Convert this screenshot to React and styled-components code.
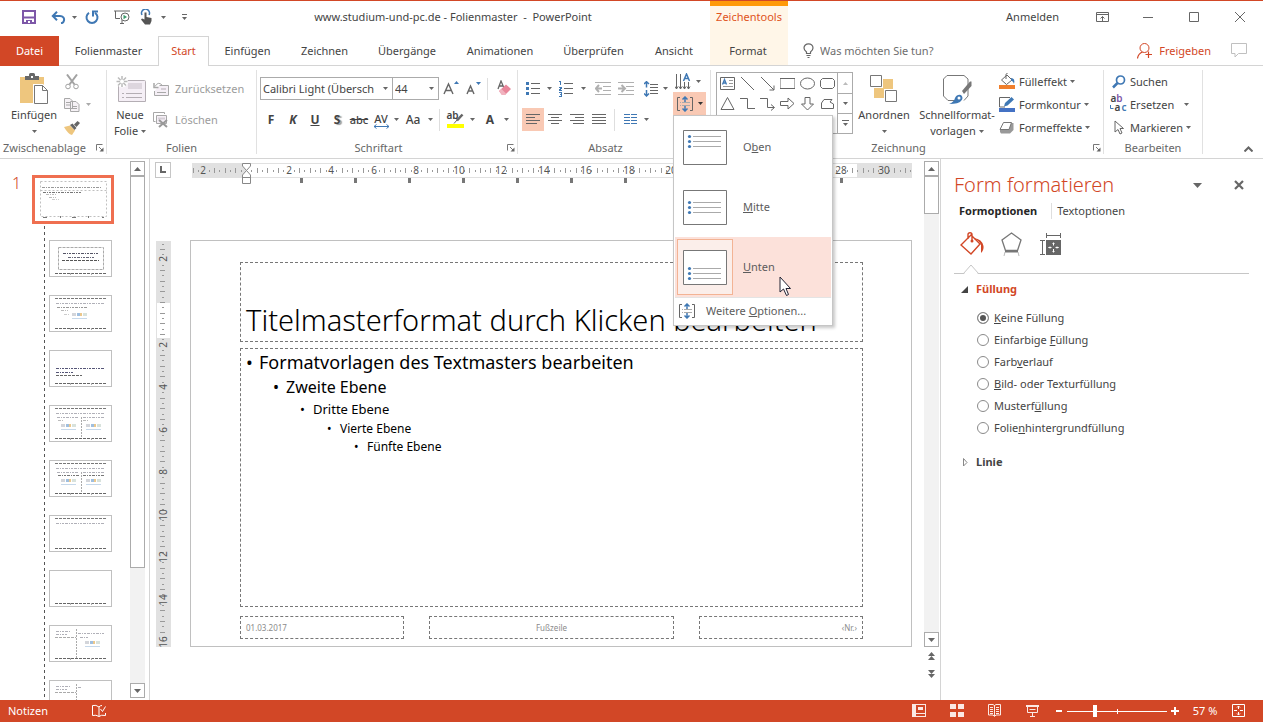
import React from "react";
import styled, { createGlobalStyle, css } from "styled-components";

const RED = "#d24726";
const GRAY = "#666";
const BLUE = "#3f78b4";
const LINE = "#d4d4d4";

const Global = createGlobalStyle`
  *, *::before, *::after { box-sizing: border-box; }
  body { margin: 0; background: #fff; color: #444; font: 11px/16px "Noto Sans", "Open Sans", sans-serif; }
  button, input, select { font: inherit; color: inherit; margin: 0; }
  button { background: none; border: 0; padding: 0; }
  svg { display: block; flex: none; }
  h1, h2, p, ul { margin: 0; padding: 0; }
`;

/* ---------- frame ---------- */
const Window = styled.div`
  height: 100vh; display: flex; flex-direction: column; overflow: hidden;
  border-top: 1px solid ${RED};
`;
const Header = styled.header`display: flex; flex: none; height: 65px;`;
const HeaderLeft = styled.div`display: flex; flex-direction: column; flex: none;`;
const HeaderRight = styled.div`flex: 1; display: flex; flex-direction: column; min-width: 0;`;
const TitleRow = styled.div`display: flex; align-items: center; height: 35px; padding-bottom: 3px;`;
const QuickAccess = styled.div`display: flex; align-items: center; width: 196px; padding-left: 20px;`;
const WindowTitle = styled.h1`flex: 1; text-align: center; font-size: 11px; font-weight: 400;`;
const TabRow = styled.nav`display: flex; height: 30px; border-bottom: 1px solid ${LINE};`;
const Tab = styled.button`
  width: ${(p) => p.$w}px; height: 30px; padding-bottom: 1px; flex: none;
  ${(p) => p.$kind === "file" && css`background: ${RED}; color: #fff;`}
  ${(p) => p.$kind === "active" && css`
    background: #fff; color: ${RED}; border: 1px solid ${LINE}; border-bottom: 0; padding-bottom: 2px;`}
`;
const Context = styled.div`
  width: 78px; flex: none; display: flex; flex-direction: column; background: #fff6e8;
  border-top: 5px solid #ff9a0a; border-bottom: 1px solid ${LINE}; text-align: center;
`;
const ContextName = styled.span`height: 30px; padding-top: 3px; color: #e0541c;`;
const ContextTab = styled.button`height: 29px; padding: 0 2px 0 0;`;
const Slot = styled.button`
  width: ${(p) => p.$w || 22}px; height: ${(p) => p.$h || 22}px; flex: none;
  margin-left: ${(p) => p.$ml || 0}px;
  display: flex; align-items: center; justify-content: center;
  background: ${(p) => (p.$on ? "#f9c9b4" : "transparent")};
`;
const SignIn = styled.button`margin: 0 20px 0 auto;`;
const SearchRow = styled.div`
  display: flex; align-items: center; height: 30px; padding-left: 15px; border-bottom: 1px solid ${LINE};
`;
const TellMe = styled.input`
  border: 0; outline: 0; background: none; padding: 0; margin-left: 6px; width: 160px;
  &::placeholder { color: #6d6d6d; opacity: 1; }
`;
const Share = styled.button`display: flex; align-items: center; gap: 7px; margin-left: auto; padding-right: 4px; color: ${RED};`;

/* ---------- ribbon ---------- */
const Ribbon = styled.section`
  display: flex; flex: none; height: 93px; padding: 4px 0; border-bottom: 1px solid ${LINE};
  position: relative; z-index: 2;
`;
const Group = styled.div`
  display: flex; flex-direction: column; flex: none; width: ${(p) => p.$w}px;
  border-right: 1px solid #e1e1e1;
`;
const GroupBody = styled.div`display: flex; flex: 1; padding-left: ${(p) => p.$pad || 0}px;`;
const GroupFoot = styled.div`display: flex; align-items: center; gap: 4px; height: 12px; color: #666;`;
const GroupName = styled.span`flex: 1; text-align: center;`;
const Col = styled.div`
  display: flex; flex-direction: column; flex: none; gap: ${(p) => p.$gap || 0}px;
  padding-top: ${(p) => p.$top || 0}px;
`;
const Row = styled.div`display: flex; align-items: center; flex: none; height: ${(p) => p.$h || 23}px;`;
const Big = styled.button`
  display: flex; flex-direction: column; align-items: center; flex: none; width: ${(p) => p.$w}px;
`;
const BigArt = styled.span`display: flex; align-items: center; justify-content: center; height: 37px;`;
const BigText = styled.span`display: flex; align-items: center; justify-content: center; gap: 3px; height: 16px; white-space: nowrap;`;
const Command = styled.button`
  display: flex; align-items: center; gap: 3px; height: 23px; white-space: nowrap;
  color: ${(p) => (p.$off ? "#9c9c9c" : "#444")};
`;
const CommandArt = styled.span`display: flex; justify-content: center; width: 17px;`;
const Rule = styled.span`width: 1px; height: 22px; background: #dedede; margin: 0 ${(p) => p.$m || 4}px;`;
const Letter = styled.span`
  font-size: 12px; font-weight: ${(p) => (p.$b ? 700 : 500)};
  font-style: ${(p) => (p.$i ? "italic" : "normal")};
  text-decoration: ${(p) => p.$deco || "none"};
  text-shadow: ${(p) => (p.$shadow ? "2px 1px 1px #999" : "none")};
`;
const Small = styled(Letter)`font-size: 11px;`;
const Combo = styled.span`
  position: relative; width: ${(p) => p.$w}px; height: 23px; margin-right: -1px; display: block;
  select { appearance: none; width: 100%; height: 23px; border: 1px solid #ababab; background: #fff; padding: 0 14px 0 2px; border-radius: 0; }
  svg { position: absolute; right: 5px; top: 10px; }
`;
const Gallery = styled.div`display: flex; width: 137px; height: 62px; border: 1px solid #ababab; margin-top: 2px;`;
const Shapes = styled.div`flex: 1; display: grid; grid-template-columns: repeat(6, 20px); grid-auto-rows: 20px; overflow: hidden;`;
const GalleryKeys = styled.div`
  display: grid; grid-template-rows: repeat(3, 1fr); width: 15px; border-left: 1px solid #ababab;
  button { display: flex; align-items: center; justify-content: center; }
  button + button { border-top: 1px solid #ababab; }
`;
const Collapse = styled.div`flex: 1; display: flex; align-items: flex-end; justify-content: flex-end; padding-right: 4px;`;
const DirectionCol = styled.div`display: flex; flex-direction: column; margin-left: auto; padding-right: 4px;`;
const AlignInner = styled.span`display: flex; align-items: center; gap: 5px;`;

/* ---------- drop-down menu ---------- */
const Anchor = styled.div`position: relative; display: flex;`;
const Menu = styled.div`
  position: absolute; left: 0; top: 23px; width: 160px; padding: 1px; background: #fff;
  border: 1px solid #c6c6c6; box-shadow: 2px 2px 3px rgba(0, 0, 0, 0.22); z-index: 5; color: #5c5c5c;
`;
const MenuItem = styled.button`
  display: flex; align-items: center; gap: 10px; width: 100%; height: 60px; padding-left: 2px; position: relative;
  background: ${(p) => (p.$on ? "#fce1da" : "transparent")};
`;
const Frame = styled.span`
  display: flex; align-items: center; justify-content: center; width: 56px; height: 56px;
  border: 1px solid ${(p) => (p.$on ? "#f3b394" : "transparent")};
  background: ${(p) => (p.$on ? "#fbeeea" : "transparent")};
`;
const MenuMore = styled.button`
  display: flex; align-items: center; gap: 11px; width: 100%; height: 27px; padding-left: 4px;
  border-top: 1px solid #e4e4e4;
`;
const Pointer = styled.svg`position: absolute; left: 104px; top: 39px;`;

/* ---------- work area ---------- */
const Main = styled.main`display: flex; flex: 1; min-height: 0;`;
const Navigator = styled.aside`
  display: flex; width: 150px; flex: none; border-right: 1px solid ${LINE}; padding: 2px 4px 2px 0;
`;
const Outline = styled.div`flex: 1; overflow: hidden; margin-bottom: -2px;`;
const MasterRow = styled.div`
  display: flex; padding: 14px 0 0 12px; gap: 13px;
  > span { width: 7px; font-size: 16px; line-height: 16px; font-weight: 300; color: ${RED}; }
`;
const MasterThumb = styled.button`border: 3px solid #ef6f50; width: 82px; height: 49px; padding: 3px; background: #fff;`;
const Layouts = styled.ul`
  list-style: none; margin-left: 44px; padding: 16px 0 0 5px; display: grid; gap: 18px;
  background: repeating-linear-gradient(#fff 0 2px, #555 2px 5px, #fff 5px 6px) 0 0 / 1px 100% no-repeat;
`;
const Thumb = styled.button`display: block; border: 1px solid #c0c0c0; width: 63px; height: 37px; background: #fff;`;
const Scroll = styled.div`display: flex; flex-direction: column; width: 15px; flex: ${(p) => (p.$grow ? 1 : "none")}; background: #f2f2f2;`;
const ScrollKey = styled.button`
  width: 15px; height: 15px; flex: none; border: 1px solid #ababab; background: #fff;
  display: flex; align-items: center; justify-content: center;
`;
const ScrollThumb = styled.div`height: ${(p) => p.$h}; border: 1px solid #ababab; background: #fff;`;
const Fill = styled.div`flex: 1;`;
const Editor = styled.section`display: flex; flex: 1; min-width: 0; border-right: 1px solid ${LINE}; padding-top: 2px;`;
const EditorSide = styled.div`display: flex; flex-direction: column; width: 16px; padding-bottom: 17px;`;
const Stage = styled.div`
  flex: 1; min-width: 0; display: grid; grid-template-columns: 16px 1fr; grid-template-rows: 26px auto;
  column-gap: 19px; row-gap: 53px; align-content: start; padding: 0 12px 0 5px;
`;
const Corner = styled.button`
  width: 16px; height: 16px; margin-top: 1px; border: 1px solid #c6c6c6;
  display: flex; align-items: center; justify-content: center;
`;
const Slide = styled.article`
  border: 1px solid #c0c0c0; aspect-ratio: 722 / 407; padding: 21px 48px 7px 49px;
  display: flex; flex-direction: column; color: #000; background: #fff; min-width: 0;
`;
const dashed = css`border: 1px dashed #777;`;
const TitleBox = styled.div`
  ${dashed} height: 80px; padding: 0 5px 2px; display: flex; align-items: flex-end;
  h2 { font-size: 29px; line-height: 38px; font-weight: 300; white-space: nowrap; }
`;
const BodyBox = styled.ul`${dashed} list-style: none; margin: 6px 0 9px; flex: 1; padding: 0 5px;`;
const Level = styled.li`
  display: flex; padding-left: ${(p) => p.$in}px; height: ${(p) => p.$h}px; align-items: center;
  font-size: ${(p) => p.$s}px; line-height: ${(p) => p.$h}px; white-space: nowrap;
  &::before { content: "•"; width: 13px; font-size: ${(p) => p.$s}px; }
`;
const Footers = styled.div`display: grid; grid-template-columns: 164fr 245fr 164fr; gap: 25px;`;
const FootBox = styled.p`${dashed} height: 23px; padding: 0 5px; font-size: 8px; line-height: 21px; color: #8b8b8b; text-align: ${(p) => p.$a};`;

/* ---------- format pane ---------- */
const Pane = styled.aside`width: 322px; flex: none; padding: 12px 14px 0 13px;`;
const PaneHead = styled.div`
  display: flex; align-items: center; height: 28px; margin-right: -11px;
  h2 { flex: 1; font-size: 20px; line-height: 28px; font-weight: 300; color: ${RED}; }
`;
const PaneTabs = styled.div`
  display: flex; align-items: center; height: 24px; padding-left: 5px;
  button + button { border-left: 1px solid #dedede; padding-left: 5px; margin-left: 14px; }
`;
const PaneTab = styled.button`font-weight: ${(p) => (p.$on ? 700 : 400)}; color: ${(p) => (p.$on ? "#262626" : "#444")};`;
const PaneIcons = styled.div`
  display: flex; height: 51px; align-items: center; padding: 0 0 8px 0; border-bottom: 1px solid #c6c6c6; position: relative;
  > svg { position: absolute; left: 9px; bottom: -1px; }
`;
const Section = styled.button`
  display: flex; align-items: center; width: 100%; font-weight: 700; padding-left: 7px; gap: 7px; height: 16px;
  color: ${(p) => (p.$on ? RED : "#444")}; margin-top: ${(p) => (p.$on ? 7 : 15)}px;
`;
const Options = styled.fieldset`border: 0; margin: 10px 0 0; padding: 0 0 0 23px; min-width: 0;`;
const Option = styled.label`display: flex; align-items: center; gap: 5px; height: 22px;`;
const Radio = styled.input`
  appearance: none; width: 12px; height: 12px; border: 1px solid #8a8a8a; border-radius: 50%; flex: none;
  &:checked { background: #555; box-shadow: inset 0 0 0 2px #fff; }
`;

/* ---------- status bar ---------- */
const Status = styled.footer`
  display: flex; align-items: center; height: 22px; flex: none; background: ${RED}; color: #fff; padding: 0 14px 1px 8px;
`;
const Zoom = styled.input`
  appearance: none; width: 100px; height: 14px; background:
    linear-gradient(#fff, #fff) 50px 5px / 1px 5px no-repeat,
    linear-gradient(#fff, #fff) 0 7px / 100% 1px no-repeat;
  &::-webkit-slider-thumb { appearance: none; width: 4px; height: 12px; background: #fff; }
`;
const ZoomValue = styled.output`width: 44px; text-align: center;`;

/* ---------- drawings ---------- */
const Svg = ({ w, h, children, ...p }) => (
  <svg width={w} height={h} viewBox={`0 0 ${w} ${h}`} fill="none" stroke={GRAY} aria-hidden="true" {...p}>{children}</svg>
);
const Caret = ({ c = GRAY, w = 5, up }) => (
  <Svg w={w} h={(w + 1) / 2} stroke="none">
    <path d={up ? `M0 ${(w + 1) / 2}H${w}L${w / 2} 0z` : `M0 0H${w}L${w / 2} ${(w + 1) / 2}z`} fill={c} />
  </Svg>
);
const Drop = ({ w = 10, label, c }) => <Slot $w={w} aria-label={label || "Optionen"}><Caret c={c} /></Slot>;
const Launcher = () => (
  <Slot $w={13} $h={8} aria-label="Dialogfeld öffnen">
    <Svg w={8} h={8}><path d="M.5 6.5V.5H6.5M3 3L6 6" stroke="#777" /><path d="M7.5 3.5V7.5H3.500z" fill={GRAY} stroke="none" /></Svg>
  </Slot>
);
const Save = () => (
  <Svg w={14} h={14} stroke="#7d57a8"><path d="M1 1H13V13H1z" strokeWidth="2" /><path d="M1 7.5H13" strokeWidth="2" /><path d="M4 14V10H10V14" fill="#7d57a8" stroke="none" /><path d="M6 11h2v2H6z" fill="#fff" stroke="none" /></Svg>
);
const Undo = () => (
  <Svg w={15} h={13} stroke={BLUE}><path d="M2 5H9C12 5 13.5 7 13 9.500Q12.500 12 10 12.300" strokeWidth="2" /><path d="M6 .8L1.800 5L6 9.200" strokeWidth="2" /></Svg>
);
const Redo = () => (
  <Svg w={14} h={14} stroke={BLUE}><path d="M4 2.800A5.500 5.500 0 1 0 10 2.800" strokeWidth="2" /><path d="M8 6.500V1.500H13" strokeWidth="2" /></Svg>
);
const Play = () => (
  <Svg w={17} h={15}><path d="M0 1H16M1.500 1V8.500H6M6 13.500H10M8 10V13" /><circle cx="11" cy="7" r="4" fill="#fff" /><path d="M9.500 4.800L13 7L9.500 9.200z" fill="#3c9a6c" stroke="none" /></Svg>
);
const Touch = () => (
  <Svg w={14} h={16}><path d="M2 6A4 4 0 1 1 9 6" stroke={BLUE} strokeWidth="1.500" /><path d="M4.500 3.500h2V8l5 1v3l-1.500 3.500H5L1 10.500l1-1 2.500 1z" fill="#555" stroke="none" /></Svg>
);
const Bulb = () => (
  <Svg w={11} h={15}><path d="M3.500 10.500V9C1.500 7.500 1 6 1 5A4.500 4.200 0 0 1 10 5C10 6 9.500 7.500 7.500 9V10.500zM3.500 12.500H7.500M4.500 14.500H6.500" strokeWidth="1.200" /></Svg>
);
const Person = () => (
  <Svg w={15} h={16} stroke={RED}><circle cx="7.500" cy="5" r="4.500" /><path d="M.5 15.500C1 11.500 3 10 5.500 9M8.500 11.500H15M11.500 8.500V15" strokeWidth="1.200" /></Svg>
);
const Bubble = () => <Svg w={16} h={15} stroke="#c0c0c0"><path d="M.5 .5H15.500V10.500H7.500L4 14V10.500H.5z" /></Svg>;
const Paste = () => (
  <Svg w={28} h={31}>
    <path d="M0 4H24V30H0z" fill="#eec67e" stroke="none" /><path d="M5 7V3H9V1.500Q9 0 10.500 0H13.500Q15 0 15 1.500V3H19V7z" fill="#686868" stroke="none" /><path d="M11 3h2v2h-2z" fill="#fff" stroke="none" />
    <path d="M13 11H23L28 16V31H13z" fill="#fff" stroke="none" /><path d="M14.500 12.500H22.500L27.500 17.500V30.500H14.500z" fill="#fff" stroke="#777" /><path d="M22.500 12.500V17.500H27.500" stroke="#777" />
  </Svg>
);
const Cut = () => (
  <Svg w={14} h={16} stroke="#a2a2a2"><path d="M2 .5L9.500 10.500M12 .5L4.500 10.500" strokeWidth="2" /><circle cx="3" cy="12.500" r="2.300" /><circle cx="11" cy="12.500" r="2.300" /></Svg>
);
const Copy = () => (
  <Svg w={16} h={14} stroke="#a8a8a8"><path d="M.5 .5H6L8.500 3V10.500H.5zM6.500 3.500H12L15 6.500V13.500H6.500z" fill="#f6f2f6" /><path d="M2 4.500H6M2 7H6M8 8.500H13M8 10.500H13" /></Svg>
);
const Brush = () => (
  <Svg w={16} h={14} stroke="none"><path d="M0 6L6 4.500L11 9.500L8 14Q4 13 0 6z" fill="#eec67e" /><path d="M6 4L8.500 2.500L12.500 7L10.500 9z" fill="#666" /><path d="M10 3.500L13.500 0L16 2L12.500 6z" fill="#666" /></Svg>
);
const NewSlide = () => (
  <Svg w={31} h={28} stroke="#b4aeb4"><path d="M4.500 5.500H29.500Q30.500 5.500 30.500 6.500V26.500H3.500V6.500z" fill="#f5eff6" /><path d="M13 8h14v6H13z" fill="#ddd6de" stroke="none" /><path d="M7 18.500H9M11 18.500H27M7 22.500H9M11 22.500H27" /><circle cx="7" cy="6.500" r="6" fill="#fff" stroke="none" /><path d="M7 1V12M1.500 6.500H12.500M3 2.500L11 10.500M11 2.500L3 10.500" stroke="#bbb" strokeWidth="1.500" /><circle cx="7" cy="6.500" r="2" fill="#fff" stroke="none" /></Svg>
);
const Reset = () => (
  <Svg w={16} h={14} stroke="#a8a8a8"><path d="M6.500 3.500H15.500V13.500H1.500V9" fill="#f5eff6" /><path d="M8 6h5v2H8z" fill="#d5ced6" stroke="none" /><path d="M4 10.500H13M2 4.500Q5 -1 9 3" /><path d="M1 1V5.500H5.500" strokeWidth="1.500" /></Svg>
);
const Remove = () => (
  <Svg w={16} h={16} stroke="#a8a8a8"><path d="M2.500 9.500H.5V.5H11.500V2" /><path d="M3.500 3.500H13.500V11.500H3.500z" fill="#f5eff6" /><path d="M5 5.500h7v2H5z" fill="#d5ced6" stroke="none" /><path d="M6 8L14 15M14 8L6 15" stroke="#999" strokeWidth="2" /></Svg>
);
const Eraser = () => (
  <Svg w={15} h={17} stroke="none"><path d="M1 9L4 1L7 8M2 6H6" stroke={GRAY} strokeWidth="1.300" /><path d="M2 11L9 4.500L14 9L8 15H5z" fill="#e8869a" /><path d="M2 11L4.500 9L9 13.500L8 15H5z" fill="#f1b3bf" /></Svg>
);
const Marker = () => (
  <Svg w={17} h={16}><path d="M0 12H17V16H0z" fill="#ff0" stroke="none" /><path d="M10 8.500L15.500 2.500" strokeWidth="2.500" /><path d="M7 11.500L10 8" /></Svg>
);
const MarkStack = styled.span`
  position: relative; display: block;
  > span { position: absolute; left: 0; top: -4px; font-size: 10px; line-height: 14px; font-weight: 600; }
`;
const Lines = ({ rows, c = GRAY, w = 14 }) => (
  <Svg w={w} h={11} stroke={c} shapeRendering="crispEdges">
    {rows.map(([a, b], i) => <path key={i} d={`M${a} ${i * 3 + 0.5}H${b}`} />)}
  </Svg>
);
const Bullets = () => (
  <Svg w={14} h={15} shapeRendering="crispEdges"><path d="M5 2.500H14M5 7.500H14M5 12.500H14" /><path d="M0 1h3v3H0zM0 6h3v3H0zM0 11h3v3H0z" fill={BLUE} stroke="none" /></Svg>
);
const Numbers = () => (
  <Svg w={15} h={16} shapeRendering="crispEdges"><path d="M5 2.500H14M5 7.500H14M5 12.500H14" /><path d="M0 .5H1.500V4M0 6.500H2.500V7.500L.5 8.500V9.500H3M0 11.500H2.500V15.500H0M1 13.500H2" stroke={BLUE} /></Svg>
);
const Indent = ({ right }) => (
  <Svg w={16} h={13} stroke="#b0b0b0"><path d="M0 .5H16M8 4.500H16M8 8.500H16M0 12.500H16" shapeRendering="crispEdges" />{right ? <path d="M0 6.500H7M3.500 3L7 6.500L3.500 10" strokeWidth="2" /> : <path d="M1 6.500H7M4 3L.8 6.500L4 10" strokeWidth="2" />}</Svg>
);
const Spacing = () => (
  <Svg w={14} h={16}><path d="M6 3.500H14M6 6.500H14M6 9.500H14M6 12.500H14" shapeRendering="crispEdges" /><path d="M2.500 1V6.500M0 3L2.500 .7L5 3M2.500 9V15M0 12.500L2.500 15L5 12.500" stroke={BLUE} strokeWidth="1.500" /></Svg>
);
const Direction = () => (
  <Svg w={16} h={17}><path d="M1.500 1V16M5.500 1V16M9.500 9V16M13.500 9V16M0 13.500L1.500 16L3 13.500M4 13.500L5.500 16L7 13.500M8 13.500L9.500 16L11 13.500M12 13.500L13.500 16L15 13.500" /><path d="M8.500 8L11.500 1L14.500 8M9.500 5.500H13.500" stroke={BLUE} strokeWidth="1.500" /></Svg>
);
const VAlign = () => (
  <Svg w={16} h={16}><path d="M3 1.500H.5V14.500H3M13 1.500H15.500V14.500H13" /><path d="M3 6.500H4M5 6.500H13M3 9.500H4M5 9.500H13" stroke="#aaa" /><path d="M8 1V6M5.500 3.500L8 1L10.500 3.500M8 10V15M5.500 12.500L8 15L10.500 12.500" stroke={BLUE} strokeWidth="1.500" /></Svg>
);
const GrowArt = ({ up }) => (
  <Svg w={16} h={17} stroke="none"><path d={up ? "M11 4H16L13.500 1z" : "M11 2H16L13.500 5z"} fill={BLUE} /><path d={up ? "M1 14L5.500 4L10 14M2.500 10.500H8.500" : "M2 14L5.500 6L9 14M3 11H8"} stroke={GRAY} strokeWidth="1.400" /></Svg>
);
const Spread = () => (
  <Svg w={17} h={5} stroke={BLUE}><path d="M1 2.500H16M3.500 .5L1 2.500L3.500 4.500M13.500 .5L16 2.500L13.500 4.500" /></Svg>
);
const Stack = styled.span`display: flex; flex-direction: column; align-items: center; line-height: 11px; padding-top: 2px;`;
const Arrange = () => (
  <Svg w={28} h={28} stroke="#777"><path d="M13 4H23V14H13zM4 13H14V23H4z" fill="#eec67e" stroke="none" /><path d="M.5 .5H11.500V11.500H.5zM15.500 15.500H26.500V26.500H15.500z" fill="#fff" /></Svg>
);
const Quick = () => (
  <Svg w={30} h={30} stroke="#777"><path d="M16 26.500H6L1.500 22V5L5 1.500H22L26 5V22L22 26.500" /><path d="M20 17L28 7.500H29.500V12L22 20z" fill="#777" stroke="none" /><path d="M7 30Q12 28 13 24Q15 20 19 21Q22 24 19 27Q17 30 7 30z" fill={BLUE} stroke="none" /><circle cx="17" cy="24" r="1.500" fill="#fff" stroke="none" /></Svg>
);
const FillArt = () => (
  <Svg w={17} h={17}><path d="M2.500 7L8 2L13 7L7.500 11.500zM7 6V1.500Q7 .5 8.500 .5" fill="none" /><path d="M12 5Q16.500 5 15 11Q14.500 8 12 7.500z" fill={BLUE} stroke="none" /><path d="M0 12H16V16H0z" fill="#f07f2c" stroke="none" /></Svg>
);
const OutlineArt = () => (
  <Svg w={17} h={17}><path d="M11 1.500H.5V11M.5 11H6" /><path d="M5 10.500L6 7L12.500 1L15 3.500L8.500 9.500z" fill={BLUE} stroke="none" /><path d="M0 12H16V16H0z" fill="#4472c4" stroke="none" /></Svg>
);
const EffectsArt = () => (
  <Svg w={17} h={14}><path d="M6 2H14.500V9L11 12.500H2L1 11V8z" fill="#999" stroke="none" /><path d="M4.500 1.500H12.500L10 8.500H1z" fill="#fff" stroke="#777" strokeLinejoin="round" /></Svg>
);
const Find = () => (
  <Svg w={14} h={14} stroke={BLUE}><circle cx="8.500" cy="5" r="4" strokeWidth="1.700" /><path d="M5.500 8L1 12.500" strokeWidth="2.500" /></Svg>
);
const SwapArt = styled.span`
  display: flex; flex-direction: column; width: 16px; font-size: 10px; line-height: 9px; font-weight: 600; padding-bottom: 3px;
  span { display: flex; align-items: center; }
  span + span { justify-content: flex-end; gap: 1px; }
  b { font-weight: 600; color: #7d57a8; } i { font-style: normal; color: ${BLUE}; }
`;
const SelectArt = () => <Svg w={10} h={15}><path d="M1 1V12L4 9.500L6 14L8 13L6 8.500H9.500z" /></Svg>;
const StopArt = () => <Svg w={8} h={8} stroke="#666"><path d="M2 0V6H7" strokeWidth="2" /></Svg>;

const shapeArt = [
  <><path d="M.5 1.500H14.500V13.500H.5z" /><path d="M9 4.500H13M9 7.500H13M3 10.500H13" stroke="#999" /><path d="M2.500 8.500L4.500 3.500L6.500 8.500M3 7H6" stroke={BLUE} strokeWidth="1.300" /></>,
  <path d="M1 1L14 14" />,
  <path d="M1 1L14 14M14 9.500V14H9.500" />,
  <path d="M0 2.500H15V12.500H0z" />,
  <ellipse cx="7.500" cy="7.500" rx="7" ry="5.500" />,
  <path d="M2.500 2.500H12.500L14.500 4.500V10.500L12.500 12.500H2.500L.5 10.500V4.500z" />,
  <path d="M7.500 1.500L14 13.500H1z" />,
  <path d="M0 2.500H7.500V12.500H15" />,
  <path d="M0 2.500H7.500V11.500H14M11 8.500L14.500 11.500L11 14.500" />,
  <path d="M.5 5.500H8V2L14 7.500L8 13V9.500H.5z" />,
  <path d="M5 1.500H10V8H13.500L7.500 14L1.500 8H5z" />,
  <path d="M1.500 12.500V7L4 3.500H12L10 6L13.500 8V12.500z" />,
];
const shapeNames = ["Textfeld", "Linie", "Pfeil", "Rechteck", "Ellipse", "Abgerundetes Rechteck", "Dreieck", "Gewinkelt", "Gewinkelter Pfeil", "Pfeil rechts", "Pfeil unten", "Freihandform"];

const BoxArt = ({ top }) => (
  <Svg w={44} h={35} stroke="#777">
    <path d="M.5 .5H43.500V34.500H.5z" fill="#fff" />
    {[0, 5, 10].map((d) => (
      <g key={d}><path d={`M10 ${top + d + 0.5}H38`} stroke="#aaa" /><circle cx="6.500" cy={top + d + 0.5} r="1.600" fill={BLUE} stroke="none" /></g>
    ))}
  </Svg>
);

/* ---------- rulers ---------- */
const CM = 21.26;
const ticks = (n) => Array.from({ length: n }, (_, i) => i);
const HRuler = () => (
  <svg width="100%" height="26" aria-hidden="true">
    <rect x="2" y="2" width="100%" height="15" fill="#e1e1e1" />
    <rect x="56" y="3" width="611" height="13" fill="#fff" />
    {ticks(140).map((i) => {
      const q = i - 10;
      if (q % 8 === 0) return null;
      const x = Math.round(56 + (q * CM) / 4);
      return <rect key={i} x={x} y={q % 2 ? 9 : 7} width="1" height={q % 2 ? 2 : 5} fill="#999" />;
    })}
    {ticks(17).map((i) => {
      const n = (i - 1) * 2;
      return n === 0 ? null : <text key={i} x={Math.round(56 + n * CM)} y="13" fontSize="10" fill="#555" textAnchor="middle">{Math.abs(n)}</text>;
    })}
    {ticks(11).map((i) => <rect key={i} x={Math.round(110 + i * 54)} y="17" width="3" height="5" fill="#777" />)}
    <path d="M52.500 2.500H60.500V5L56.500 9.500L60.500 14V22.500H52.500V14L56.500 9.500L52.500 5zM52.500 16.500H60.500" fill="#fff" stroke="#888" />
  </svg>
);
const VRulerBox = styled.div`position: relative; margin: 1px 0 0 1px; min-height: 0; overflow: hidden; svg { position: absolute; inset: 0; }`;
const VRuler = () => (
  <VRulerBox>
    <svg width="15" height="100%" aria-hidden="true">
      <rect width="15" height="100%" fill="#e1e1e1" />
      <rect x="1" y="62" width="13" height="35" fill="#fff" />
      {ticks(76).map((i) => {
        const q = i - 11;
        if (q % 8 === 0 && q !== 0) return null;
        return <rect key={i} x={q % 2 ? 6 : 4} y={Math.round(61 + (q * CM) / 4)} width={q % 2 ? 2 : 5} height="1" fill="#999" />;
      })}
      {ticks(10).map((i) => {
        const n = (i - 1) * 2;
        const y = Math.round(61 + n * CM);
        return n === 0 ? null : <text key={i} transform={`translate(11 ${y}) rotate(-90)`} fontSize="10" fill="#555" textAnchor="middle">{Math.abs(n)}</text>;
      })}
    </svg>
  </VRulerBox>
);

/* ---------- thumbnails ---------- */
const Scrawl = ({ x, y, w, c = "#b0b0b8" }) => <path d={`M${x} ${y}H${x + w}`} stroke={c} strokeDasharray="3 1 1 1 2 1" />;
const Media = ({ x, y }) => (
  <g stroke="none"><path d={`M${x} ${y}h4v3h-4z`} fill="#d3d5da" /><path d={`M${x + 5} ${y}h3v3h-3z`} fill="#9fbfe0" /><path d={`M${x + 8} ${y}h2v3h-2z`} fill="#ecc88c" /><path d={`M${x + 11} ${y}h4v3h-4z`} fill="#d8e2dc" /><path d={`M${x} ${y + 5}h15v1h-15z`} fill="#c6d8ea" /></g>
);
const Mini = ({ kind }) => (
  <Svg w={61} h={35} stroke="#aaa">
    {kind < 7 && kind > 0 && kind !== 2 && kind !== 6 && <path d="M5 2.500H57" stroke="#777" strokeDasharray="3 1" />}
    <path d="M5 32.500H57" stroke="#666" strokeDasharray="3 1" /><path d="M20.500 32V34M41.500 32V34" />
    {kind === 0 && <><path d="M8.500 6.500H53.500V28.500H8.500z" strokeDasharray="3 1" /><Scrawl x={13} y={12.5} w={36} c="#556" /><Scrawl x={18} y={16.5} w={26} c="#667" /><path d="M12 19.500H49" stroke="#555" strokeDasharray="3 1" /></>}
    {kind === 1 && <><Scrawl x={6} y={7.5} w={48} /><Scrawl x={7} y={11.5} w={30} c="#999" /><Scrawl x={11} y={14.5} w={7} c="#bbb" /><Scrawl x={14} y={18.5} w={6} c="#ccc" /><Media x={22} y={17} /></>}
    {kind === 2 && <><Scrawl x={6} y={17.5} w={48} c="#557" /><Scrawl x={6} y={21.5} w={17} c="#557" /><path d="M6 24.500H32" stroke="#666" strokeDasharray="3 1" /></>}
    {(kind === 3 || kind === 4) && <><Scrawl x={6} y={7.5} w={48} /><Scrawl x={7} y={11.5} w={22} /><Scrawl x={33} y={11.5} w={22} /><Scrawl x={8} y={14.5} w={kind === 4 ? 21 : 6} c={kind === 4 ? "#777" : "#bbb"} /><Scrawl x={33} y={14.5} w={kind === 4 ? 21 : 6} c={kind === 4 ? "#777" : "#bbb"} /><path d="M31.500 11V32" strokeDasharray="2 1" /><Media x={11} y={18} /><Media x={36} y={18} /></>}
    {kind === 5 && <Scrawl x={6} y={7.5} w={48} />}
    {kind >= 7 && <><Scrawl x={6} y={5.5} w={15} /><Scrawl x={6} y={8.5} w={11} /><path d="M5 11.500H26" strokeDasharray="3 1" /><path d="M26.500 3V32" strokeDasharray="2 1" /><Scrawl x={28} y={kind === 7 ? 7.5 : 6.5} w={kind === 7 ? 27 : 4} />{kind === 7 && <><Scrawl x={30} y={11.5} w={9} /><Media x={35} y={15} /></>}</>}
  </Svg>
);
const MasterMini = () => (
  <Svg w={70} h={37} stroke="#c0c0c0"><path d="M2.500 .5H68.500V9.500M2.500 .5V35.500H68.500V9.500M2.500 9.500H68.500" strokeDasharray="2 2" /><Scrawl x={4} y={6.5} w={59} c="#999" /><Scrawl x={5} y={11.5} w={38} c="#777" /><Scrawl x={8} y={13.5} w={10} c="#bbb" /><Scrawl x={11} y={16.5} w={7} c="#bbb" /><Scrawl x={14} y={18.5} w={7} c="#ccc" /><path d="M5 36.500H9M34 36.500H38M64 36.500H66M22.500 35V37M50.500 35V37" stroke="#777" /></Svg>
);

const tabs = [["Datei", 59, "file"], ["Folienmaster", 99], ["Start", 51, "active"], ["Einfügen", 77], ["Zeichnen", 77], ["Übergänge", 88], ["Animationen", 98], ["Überprüfen", 89], ["Ansicht", 72]];
const layoutNames = ["Titelfolie", "Titel und Inhalt", "Abschnittsüberschrift", "Zwei Inhalte", "Vergleich", "Nur Titel", "Leer", "Inhalt mit Überschrift", "Bild mit Überschrift"];
const fillOptions = [
  ["", "K", "eine Füllung"], ["Einfarbige ", "F", "üllung"], ["Farb", "v", "erlauf"],
  ["", "B", "ild- oder Texturfüllung"], ["Musterf", "ü", "llung"], ["Folie", "n", "hintergrundfüllung"],
];
const levels = [["Formatvorlagen des Textmasters bearbeiten", 18, 27, 0], ["Zweite Ebene", 16, 23, 27], ["Dritte Ebene", 13, 20, 54], ["Vierte Ebene", 12, 19, 81], ["Fünfte Ebene", 12, 18, 108]];

export default function App() {
  return (
    <>
      <Global />
      <Window>
        <Header>
          <HeaderLeft>
            <TitleRow>
              <QuickAccess>
                <Slot $w={18} aria-label="Speichern"><Save /></Slot>
                <Slot $w={24} $ml={8} aria-label="Rückgängig"><Undo /></Slot>
                <Drop w={8} label="Rückgängig-Liste" />
                <Slot $w={28} aria-label="Wiederholen"><Redo /></Slot>
                <Slot $w={32} aria-label="Präsentation starten"><Play /></Slot>
                <Slot $w={18} aria-label="Fingereingabe"><Touch /></Slot>
                <Drop w={14} />
                <Slot $w={28} aria-label="Symbolleiste anpassen"><Svg w={5} h={6}><path d="M0 .5H5" /><path d="M0 3H5L2.500 6z" fill={GRAY} stroke="none" /></Svg></Slot>
              </QuickAccess>
              <WindowTitle>www.studium-und-pc.de - Folienmaster&nbsp; -&nbsp; PowerPoint</WindowTitle>
            </TitleRow>
            <TabRow>
              {tabs.map(([t, w, k]) => <Tab key={t} $w={w} $kind={k}>{t}</Tab>)}
            </TabRow>
          </HeaderLeft>
          <Context><ContextName>Zeichentools</ContextName><ContextTab>Format</ContextTab></Context>
          <HeaderRight>
            <TitleRow>
              <SignIn>Anmelden</SignIn>
              <Slot $w={46} aria-label="Menüband-Anzeigeoptionen"><Svg w={13} h={10}><path d="M.5 .5H12.500V9.500H.5zM.5 2.500H12.500M6.500 9V4.500M4.500 6.500L6.500 4.500L8.500 6.500" /></Svg></Slot>
              <Slot $w={46} aria-label="Minimieren"><Svg w={10} h={1}><path d="M0 .5H10" /></Svg></Slot>
              <Slot $w={46} aria-label="Maximieren"><Svg w={10} h={10}><path d="M.5 .5H9.500V9.500H.5z" /></Svg></Slot>
              <Slot $w={46} aria-label="Schließen"><Svg w={10} h={10}><path d="M0 0L10 10M10 0L0 10" /></Svg></Slot>
            </TitleRow>
            <SearchRow>
              <Bulb />
              <TellMe aria-label="Was möchten Sie tun?" placeholder="Was möchten Sie tun?" />
              <Share><Person />Freigeben</Share>
              <Slot $w={48} aria-label="Kommentare"><Bubble /></Slot>
            </SearchRow>
          </HeaderRight>
        </Header>

        <Ribbon>
          <Group $w={107}>
            <GroupBody>
              <Big $w={68}><BigArt><Paste /></BigArt><BigText>Einfügen</BigText><BigText><Caret /></BigText></Big>
              <Col>
                <Row><Slot $w={8} aria-label="Ausschneiden"><Cut /></Slot></Row>
                <Row><Slot $w={8} aria-label="Kopieren"><Copy /></Slot><Drop w={24} c="#aaa" /></Row>
                <Row><Slot $w={8} aria-label="Format übertragen"><Brush /></Slot></Row>
              </Col>
            </GroupBody>
            <GroupFoot><GroupName>Zwischenablage</GroupName><Launcher /></GroupFoot>
          </Group>

          <Group $w={150}>
            <GroupBody $pad={4}>
              <Big $w={38}><BigArt><NewSlide /></BigArt><BigText>Neue</BigText><BigText>Folie<Caret /></BigText></Big>
              <Col $top={7} $gap={8}>
                <Command $off><OffArt><Reset /></OffArt>Zurücksetzen</Command>
                <Command $off><OffArt><Remove /></OffArt>Löschen</Command>
              </Col>
            </GroupBody>
            <GroupFoot><GroupName>Folien</GroupName></GroupFoot>
          </Group>

          <Group $w={261}>
            <GroupBody $pad={3}>
              <Col $top={7} $gap={8}>
                <Row>
                  <Combo $w={133}><select aria-label="Schriftart"><option>Calibri Light (Übersch</option></select><Caret /></Combo>
                  <Combo $w={47}><select aria-label="Schriftgrad"><option>44</option></select><Caret /></Combo>
                  <Slot $w={24} $ml={1} aria-label="Schriftgrad vergrößern"><GrowArt up /></Slot>
                  <Slot $w={20} aria-label="Schriftgrad verkleinern"><GrowArt /></Slot>
                  <Rule />
                  <Slot $w={24} aria-label="Formatierung löschen"><Eraser /></Slot>
                </Row>
                <Row>
                  <Slot><Letter $b>F</Letter></Slot>
                  <Slot><Letter $b $i>K</Letter></Slot>
                  <Slot><Letter $b $deco="underline">U</Letter></Slot>
                  <Slot><Letter $b $shadow>S</Letter></Slot>
                  <Slot><Small $deco="line-through">abc</Small></Slot>
                  <Slot aria-label="Zeichenabstand"><Stack><Small>AV</Small><Spread /></Stack></Slot>
                  <Drop w={8} />
                  <Slot $w={26}><Letter>Aa</Letter></Slot>
                  <Drop w={8} />
                  <Rule $m={5} />
                  <Slot aria-label="Texthervorhebungsfarbe" $w={20}><MarkStack><Marker /><span>ab</span></MarkStack></Slot>
                  <Drop w={14} />
                  <Slot $w={22}><Letter $b>A</Letter></Slot>
                  <Drop />
                </Row>
              </Col>
            </GroupBody>
            <GroupFoot><GroupName>Schriftart</GroupName><Launcher /></GroupFoot>
          </Group>

          <Group $w={193}>
            <GroupBody $pad={4}>
              <Col $top={7} $gap={8}>
                <Row>
                  <Slot aria-label="Aufzählungszeichen"><Bullets /></Slot><Drop />
                  <Slot $w={24} aria-label="Nummerierung"><Numbers /></Slot><Drop />
                  <Slot $w={30} aria-label="Einzug verkleinern"><Indent /></Slot>
                  <Slot $w={16} aria-label="Einzug vergrößern"><Indent right /></Slot>
                  <Slot $w={24} $ml={10} aria-label="Zeilenabstand"><AlignInner><Spacing /><Caret /></AlignInner></Slot>
                </Row>
                <Row>
                  <Slot $on $h={23} aria-label="Linksbündig"><Lines rows={[[0, 14], [0, 9], [0, 14], [0, 11]]} /></Slot>
                  <Slot aria-label="Zentriert"><Lines rows={[[0, 14], [3, 11], [0, 14], [3, 11]]} /></Slot>
                  <Slot aria-label="Rechtsbündig"><Lines rows={[[0, 14], [5, 14], [0, 14], [3, 14]]} /></Slot>
                  <Slot aria-label="Blocksatz"><Lines rows={[[0, 14], [0, 14], [0, 14], [0, 14]]} /></Slot>
                  <Rule />
                  <Slot aria-label="Spalten"><Svg w={13} h={11} stroke={BLUE} shapeRendering="crispEdges"><path d="M0 .5H6M7 .5H13M0 3.500H6M7 3.500H13M0 6.500H6M7 6.500H13M0 9.500H6M7 9.500H13" /></Svg></Slot>
                  <Drop />
                </Row>
              </Col>
              <DirectionCol>
                <Row $h={22}><Slot $w={20} aria-label="Textrichtung"><Direction /></Slot><Drop /></Row>
                <Anchor>
                  <Slot $w={33} $h={23} $on aria-label="Text ausrichten" aria-expanded="true"><AlignInner><VAlign /><Caret c="#333" /></AlignInner></Slot>
                  <Menu role="menu">
                    <MenuItem role="menuitem"><Frame><BoxArt top={6} /></Frame><span>O<u>b</u>en</span></MenuItem>
                    <MenuItem role="menuitem"><Frame><BoxArt top={12} /></Frame><span><u>M</u>itte</span></MenuItem>
                    <MenuItem role="menuitem" $on>
                      <Frame $on><BoxArt top={18} /></Frame><span><u>U</u>nten</span>
                      <Pointer width="13" height="21" viewBox="0 0 13 21" aria-hidden="true"><path d="M1 1V16L4.500 13L7.500 19.500L9.500 18.500L7 12.500H11.500z" fill="#fff" stroke="#223" /></Pointer>
                    </MenuItem>
                    <MenuMore role="menuitem"><VAlign /><span>Weitere <u>O</u>ptionen...</span></MenuMore>
                  </Menu>
                </Anchor>
              </DirectionCol>
            </GroupBody>
            <GroupFoot><GroupName>Absatz</GroupName><Launcher /></GroupFoot>
          </Group>

          <Group $w={393}>
            <GroupBody $pad={5}>
              <Gallery>
                <Shapes>
                  {shapeArt.map((a, i) => <Slot key={i} $w={20} $h={20} aria-label={shapeNames[i]}><Svg w={15} h={15}>{a}</Svg></Slot>)}
                </Shapes>
                <GalleryKeys>
                  <button aria-label="Nach oben"><Caret up c="#bbb" /></button>
                  <button aria-label="Nach unten"><Caret /></button>
                  <button aria-label="Weitere Formen"><Svg w={7} h={7}><path d="M0 .5H7" /><path d="M1 3H6L3.500 6z" fill={GRAY} stroke="none" /></Svg></button>
                </GalleryKeys>
              </Gallery>
              <Big $w={62}><BigArt><Arrange /></BigArt><BigText>Anordnen</BigText><BigText><Caret /></BigText></Big>
              <Big $w={84}><BigArt><Quick /></BigArt><BigText>Schnellformat-</BigText><BigText>vorlagen<Caret /></BigText></Big>
              <Col>
                <Command><CommandArt><FillArt /></CommandArt>Fülleffekt<Caret /></Command>
                <Command><CommandArt><OutlineArt /></CommandArt>Formkontur<Caret /></Command>
                <Command><CommandArt><EffectsArt /></CommandArt>Formeffekte<Caret /></Command>
              </Col>
            </GroupBody>
            <GroupFoot><GroupName>Zeichnung</GroupName><Launcher /></GroupFoot>
          </Group>

          <Group $w={99}>
            <GroupBody $pad={6}>
              <Col>
                <Command><CommandArt><Find /></CommandArt>Suchen</Command>
                <Command>
                  <CommandArt>
                    <SwapArt>
                      <span>a<b>b</b></span>
                      <span><Svg w={4} h={5} stroke={BLUE}><path d="M.5 0V3.500H3.500" /></Svg>a<i>c</i></span>
                    </SwapArt>
                  </CommandArt>
                  Ersetzen<DropArt><Caret /></DropArt>
                </Command>
                <Command><CommandArt><SelectArt /></CommandArt>Markieren<Caret /></Command>
              </Col>
            </GroupBody>
            <GroupFoot><GroupName>Bearbeiten</GroupName></GroupFoot>
          </Group>
          <Collapse><Slot $h={10} aria-label="Menüband reduzieren"><Svg w={9} h={6}><path d="M.5 5.500L4.500 1.500L8.500 5.500" strokeWidth="2" /></Svg></Slot></Collapse>
        </Ribbon>

        <Main>
          <Navigator>
            <Outline>
              <MasterRow><span>1</span><MasterThumb aria-label="Folienmaster"><MasterMini /></MasterThumb></MasterRow>
              <Layouts>
                {layoutNames.map((n, i) => <li key={n}><Thumb aria-label={n}><Mini kind={i} /></Thumb></li>)}
              </Layouts>
            </Outline>
            <Scroll>
              <ScrollKey aria-label="Nach oben"><Caret up w={7} /></ScrollKey>
              <ScrollThumb $h="73%" /><Fill />
              <ScrollKey aria-label="Nach unten"><Caret w={7} /></ScrollKey>
            </Scroll>
          </Navigator>

          <Editor>
            <Stage>
              <Corner aria-label="Tabstopp"><StopArt /></Corner>
              <HRuler />
              <VRuler />
              <Slide>
                <TitleBox><h2>Titelmasterformat durch Klicken bearbeiten</h2></TitleBox>
                <BodyBox>
                  {levels.map(([t, s, h, i]) => <Level key={t} $s={s} $h={h} $in={i}>{t}</Level>)}
                </BodyBox>
                <Footers><FootBox $a="left">01.03.2017</FootBox><FootBox $a="center">Fußzeile</FootBox><FootBox $a="right">‹Nr.›</FootBox></Footers>
              </Slide>
            </Stage>
            <EditorSide>
              <Scroll $grow>
                <ScrollKey aria-label="Nach oben"><Caret up w={7} /></ScrollKey>
                <ScrollThumb $h="38px" /><Fill />
                <ScrollKey aria-label="Nach unten"><Caret w={7} /></ScrollKey>
              </Scroll>
              <Slot $w={15} $h={18} aria-label="Vorherige Folie"><Svg w={7} h={8} stroke="none"><path d="M0 4L3.500 0L7 4zM0 8L3.500 4L7 8z" fill={GRAY} /></Svg></Slot>
              <Slot $w={15} $h={18} aria-label="Nächste Folie"><Svg w={7} h={8} stroke="none"><path d="M0 0L3.500 4L7 0zM0 4L3.500 8L7 4z" fill={GRAY} /></Svg></Slot>
            </EditorSide>
          </Editor>

          <Pane>
            <PaneHead>
              <h2>Form formatieren</h2>
              <Slot $w={42} aria-label="Bereichsoptionen"><Caret w={9} /></Slot>
              <Slot $w={42} $h={28} aria-label="Schließen"><Svg w={10} h={10}><path d="M1 1L9 9M9 1L1 9" strokeWidth="2.200" /></Svg></Slot>
            </PaneHead>
            <PaneTabs><PaneTab $on>Formoptionen</PaneTab><PaneTab>Textoptionen</PaneTab></PaneTabs>
            <PaneIcons>
              <Slot $w={35} $h={30} aria-label="Füllung und Linie"><Svg w={24} h={24} stroke={RED}><path d="M1 13L11 3L20 12L11 22zM8 7V2.500Q8 .7 10 .7T12 2.500V9" strokeWidth="1.400" /><circle cx="12" cy="9" r="1.500" fill={RED} stroke="none" /><path d="M14 6Q22 7 23.500 14Q24 18 21 21V13Q19 8 14 7z" fill={RED} stroke="none" /></Svg></Slot>
              <Slot $w={44} $h={30} aria-label="Effekte"><Svg w={21} h={24} stroke="#777"><path d="M10.500 1L20 8L16.500 18.500H4.500L1 8z" strokeWidth="1.300" /><path d="M4 19.500H17" strokeWidth="2" /><path d="M4 20L3 24M17 20L18 24" stroke="#bbb" /></Svg></Slot>
              <Slot $w={36} $h={30} aria-label="Größe und Eigenschaften"><Svg w={22} h={22} stroke="#666"><path d="M6 7H21V22H6z" fill="#666" stroke="none" /><path d="M6.500 0V5M20.500 0V5M6.500 2.500H20.500M0 7.500H5M0 21.500H5M2.500 7.500V21.500" /><path d="M13.500 9.500V12.500M13.500 16V19.500M8.500 14.500H11.500M15.500 14.500H18.500M12.500 11L13.500 10L14.500 11M12.500 18L13.500 19L14.500 18M10 13.500L9 14.500L10 15.500M17 13.500L18 14.500L17 15.500" stroke="#fff" /></Svg></Slot>
              <Svg w={16} h={10} stroke="#c6c6c6"><path d="M1 10H15L8 1z" fill="#fff" stroke="none" /><path d="M.5 9.500L8 1L15.500 9.500" /></Svg>
            </PaneIcons>
            <Section $on><Svg w={8} h={7} stroke="none"><path d="M7 0V7H0z" fill="#444" /></Svg>Füllung</Section>
            <Options aria-label="Füllung">
              {fillOptions.map(([a, u, b], i) => (
                <Option key={i}><Radio type="radio" name="fill" defaultChecked={i === 0} /><span>{a}<u>{u}</u>{b}</span></Option>
              ))}
            </Options>
            <Section><Svg w={8} h={9}><path d="M2.500 .5L6 4.500L2.500 8z" stroke="#888" /></Svg>Linie</Section>
          </Pane>
        </Main>

        <Status>
          <button>Notizen</button>
          <Slot $w={102} aria-label="Rechtschreibung"><Svg w={14} h={13} stroke="#fff"><path d="M7 3Q4 .5 .5 1.500V11.500Q4 10.500 7 12.500Q9 10.500 13.500 11.500V9M7 3V12.500M7 3Q8 1.500 10 1.500M8.500 5L10.500 7.500L13.500 2.500" /></Svg></Slot>
          <Fill />
          <Slot $w={38} aria-label="Normal"><Svg w={14} h={13} stroke="none"><path d="M0 0H14V13H0z" fill="#fbe9e4" /><path d="M4 1H13V12H4z" fill={RED} /><path d="M6 3H11V6H6zM4 9H13V10H4z" fill="#fbe9e4" /></Svg></Slot>
          <Slot $w={38} aria-label="Foliensortierung"><Svg w={14} h={13} stroke="none"><path d="M0 0h6v5H0zM8 0h6v5H8zM0 8h6v5H0zM8 8h6v5H8z" fill="#fbe9e4" /></Svg></Slot>
          <Slot $w={37} aria-label="Leseansicht"><Svg w={13} h={13} stroke="#fbe9e4"><path d="M.5 .5H5L6.500 1.500L8 .5H12.500V11H8L6.500 12.500L5 11H.5zM6.500 1V12M2 3.500H5M2 5.500H5M2 7.500H5M2 9.500H5M8 3.500H11M8 5.500H11M8 7.500H11M8 9.500H11" /></Svg></Slot>
          <Slot $w={38} aria-label="Bildschirmpräsentation"><Svg w={13} h={12} stroke="#fbe9e4"><path d="M0 1H13" strokeWidth="2" /><path d="M1.500 2V7.500H11.500V2M3.500 4.500H9.500M6.500 8V11M4 11.500H9" /></Svg></Slot>
          <Slot $w={16} aria-label="Verkleinern"><Svg w={6} h={2}><path d="M0 1H6" stroke="#fff" strokeWidth="2" /></Svg></Slot>
          <Zoom type="range" min="0" max="100" defaultValue="27" aria-label="Zoom" />
          <Slot $w={16} aria-label="Vergrößern"><Svg w={8} h={8}><path d="M0 4H8M4 0V8" stroke="#fff" strokeWidth="2" /></Svg></Slot>
          <ZoomValue>57 %</ZoomValue>
          <Slot $w={22} aria-label="An Fenster anpassen"><Svg w={13} h={13} stroke="#fff"><path d="M.5 .5H12.500V12.500H.5zM6.500 2V5M6.500 8V11M2 6.500H5M8 6.500H11M5 3.500L6.500 2L8 3.500M5 9.500L6.500 11L8 9.500" /></Svg></Slot>
        </Status>
      </Window>
    </>
  );
}

const OffArt = styled.span`display: flex; justify-content: center; width: 23px;`;
const DropArt = styled.span`padding-left: 7px;`;
